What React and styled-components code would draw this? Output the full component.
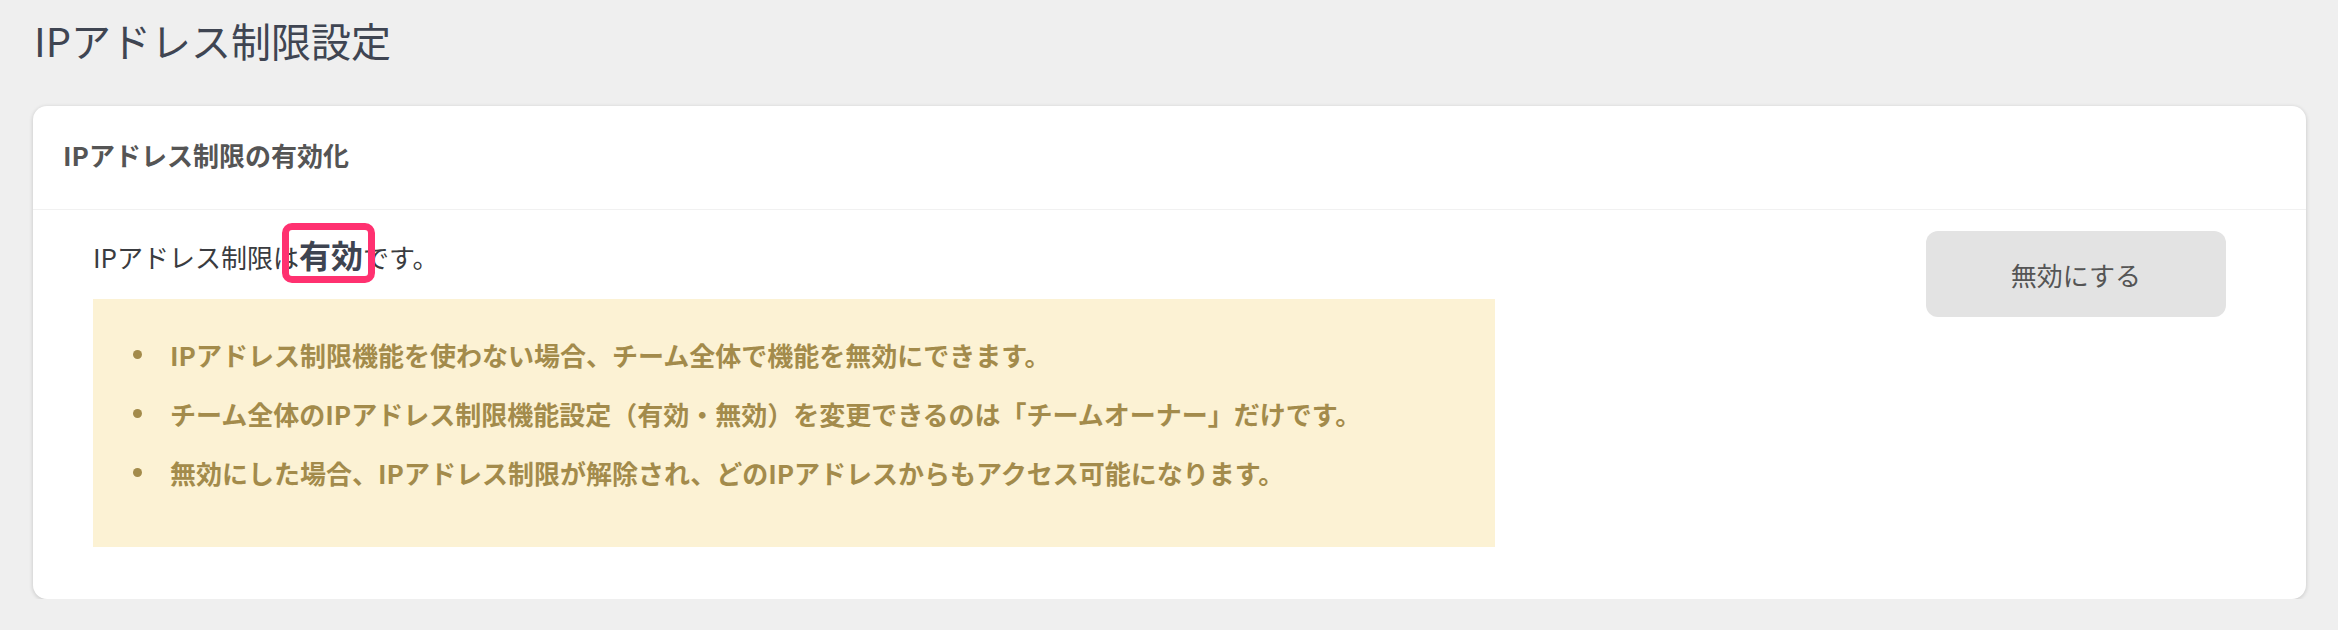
import React from "react";
import styled, { createGlobalStyle } from "styled-components";

const GlobalStyle = createGlobalStyle`
  html, body {
    margin: 0;
    padding: 0;
    background: #efefef;
  }
  body {
    font-family: "Noto Sans CJK JP", "Noto Sans", sans-serif;
  }
  * { box-sizing: border-box; }
`;

const Page = styled.div`
  padding: 16px 32px 0 33px;
`;

const Title = styled.h1`
  margin: 0 0 42px;
  padding-left: 1px;
  font-size: 40px;
  font-weight: 400;
  line-height: 48px;
  color: #3f4552;
`;

const Card = styled.section`
  background: #ffffff;
  border-radius: 14px;
  box-shadow: 0 1px 4px rgba(0, 0, 0, 0.18);
`;

const CardHeader = styled.header`
  height: 104px;
  display: flex;
  align-items: center;
  padding: 0 30px 6px;
  border-bottom: 1px solid #f1f1f1;
  font-size: 26px;
  font-weight: 700;
  color: #555555;
`;

const CardBody = styled.div`
  display: flex;
  justify-content: space-between;
  align-items: flex-start;
  padding: 21px 80px 52px 60px;
`;

const Main = styled.div`
  width: 1402px;
`;

const Status = styled.p`
  margin: 0;
  height: 50px;
  line-height: 46px;
  font-size: 26px;
  color: #3a3c40;
`;

const Highlight = styled.strong`
  position: relative;
  font-size: 32px;
  font-weight: 700;
  color: #3e4451;

  &::after {
    content: "";
    position: absolute;
    left: -17px;
    right: -12px;
    top: -8px;
    bottom: -6px;
    border: 7px solid #ff3170;
    border-radius: 10px;
    pointer-events: none;
  }
`;

const Notice = styled.ul`
  list-style: none;
  margin: 18px 0 0;
  height: 248px;
  padding: 26px 0 45px 40px;
  background: #fcf2d4;
`;

const NoticeItem = styled.li`
  display: flex;
  align-items: center;
  height: 59px;
  font-size: 26px;
  font-weight: 700;
  color: #a38b4b;

  &::before {
    content: "";
    flex: none;
    width: 9px;
    height: 9px;
    margin-right: 28px;
    border-radius: 50%;
    background: #a38b4b;
  }
`;

const ActionButton = styled.button`
  width: 300px;
  height: 86px;
  border: none;
  border-radius: 12px;
  background: #e3e3e3;
  color: #555555;
  font-family: inherit;
  font-size: 26px;
  font-weight: 400;
  cursor: pointer;
`;

const notes = [
  "IPアドレス制限機能を使わない場合、チーム全体で機能を無効にできます。",
  "チーム全体のIPアドレス制限機能設定（有効・無効）を変更できるのは「チームオーナー」だけです。",
  "無効にした場合、IPアドレス制限が解除され、どのIPアドレスからもアクセス可能になります。",
];

export default function App() {
  return (
    <>
      <GlobalStyle />
      <Page>
        <Title>IPアドレス制限設定</Title>
        <Card>
          <CardHeader>IPアドレス制限の有効化</CardHeader>
          <CardBody>
            <Main>
              <Status>
                IPアドレス制限は<Highlight>有効</Highlight>です。
              </Status>
              <Notice>
                {notes.map((n) => (
                  <NoticeItem key={n}>{n}</NoticeItem>
                ))}
              </Notice>
            </Main>
            <ActionButton type="button">無効にする</ActionButton>
          </CardBody>
        </Card>
      </Page>
    </>
  );
}
